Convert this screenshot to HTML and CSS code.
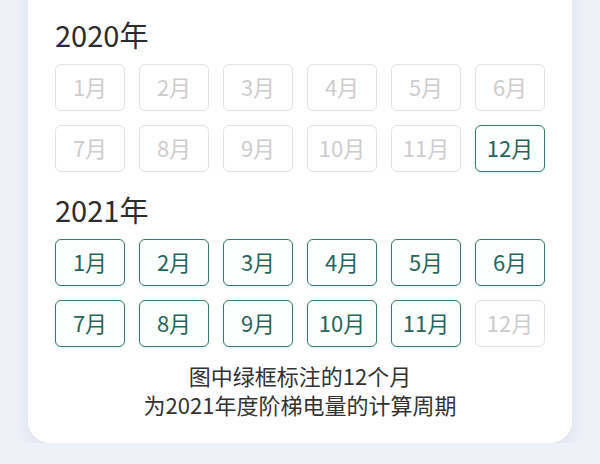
FILE: index.html
```html
<!DOCTYPE html>
<html lang="zh-CN">

<head>
    <meta charset="UTF-8">
    <meta name="viewport" content="width=device-width, initial-scale=1.0">
    <title>阶梯电量计算周期</title>
    <link rel="stylesheet" href="styles.css">
</head>

<body>
    <div class="card">
        <h2 class="year">2020年</h2>
        <div class="months">
            <span class="month">1月</span>
            <span class="month">2月</span>
            <span class="month">3月</span>
            <span class="month">4月</span>
            <span class="month">5月</span>
            <span class="month">6月</span>
            <span class="month">7月</span>
            <span class="month">8月</span>
            <span class="month">9月</span>
            <span class="month">10月</span>
            <span class="month">11月</span>
            <span class="month active">12月</span>
        </div>

        <h2 class="year second">2021年</h2>
        <div class="months">
            <span class="month active">1月</span>
            <span class="month active">2月</span>
            <span class="month active">3月</span>
            <span class="month active">4月</span>
            <span class="month active">5月</span>
            <span class="month active">6月</span>
            <span class="month active">7月</span>
            <span class="month active">8月</span>
            <span class="month active">9月</span>
            <span class="month active">10月</span>
            <span class="month active">11月</span>
            <span class="month">12月</span>
        </div>

        <p class="note">图中绿框标注的12个月<br>为2021年度阶梯电量的计算周期</p>
    </div>
</body>

</html>
```

FILE: styles.css
```css
body {
    font-family: "Noto Sans CJK SC", "Noto Sans", sans-serif;
    margin: 0;
    padding: 0;
    background-color: #eff1f8;
    color: #333;
}

.card {
    margin: -24px 28px 0;
    padding: 40px 27px 24px;
    background-color: #fff;
    border-radius: 22px;
    box-shadow: 0 6px 16px rgba(110, 120, 170, 0.14);
}

.year {
    margin: 0 0 12px;
    font-size: 29px;
    font-weight: 400;
    line-height: 36px;
    color: #2c2c2c;
}

.year.second {
    margin-top: 19px;
}

.months {
    display: grid;
    grid-template-columns: repeat(6, 70px);
    grid-auto-rows: 47px;
    gap: 14px;
}

.month {
    display: flex;
    align-items: center;
    justify-content: center;
    box-sizing: border-box;
    padding-bottom: 3px;
    border: 1.5px solid #e3e3e3;
    border-radius: 6px;
    font-size: 22px;
    color: #cdcdcd;
}

.month.active {
    border-color: #3d7a6e;
    color: #28665a;
    background-color: #fdfffe;
    box-shadow: 0 1px 3px rgba(120, 215, 205, 0.35);
}

.note {
    margin: 14px 0 0;
    text-align: center;
    font-size: 22px;
    line-height: 29px;
    color: #333;
}
```
